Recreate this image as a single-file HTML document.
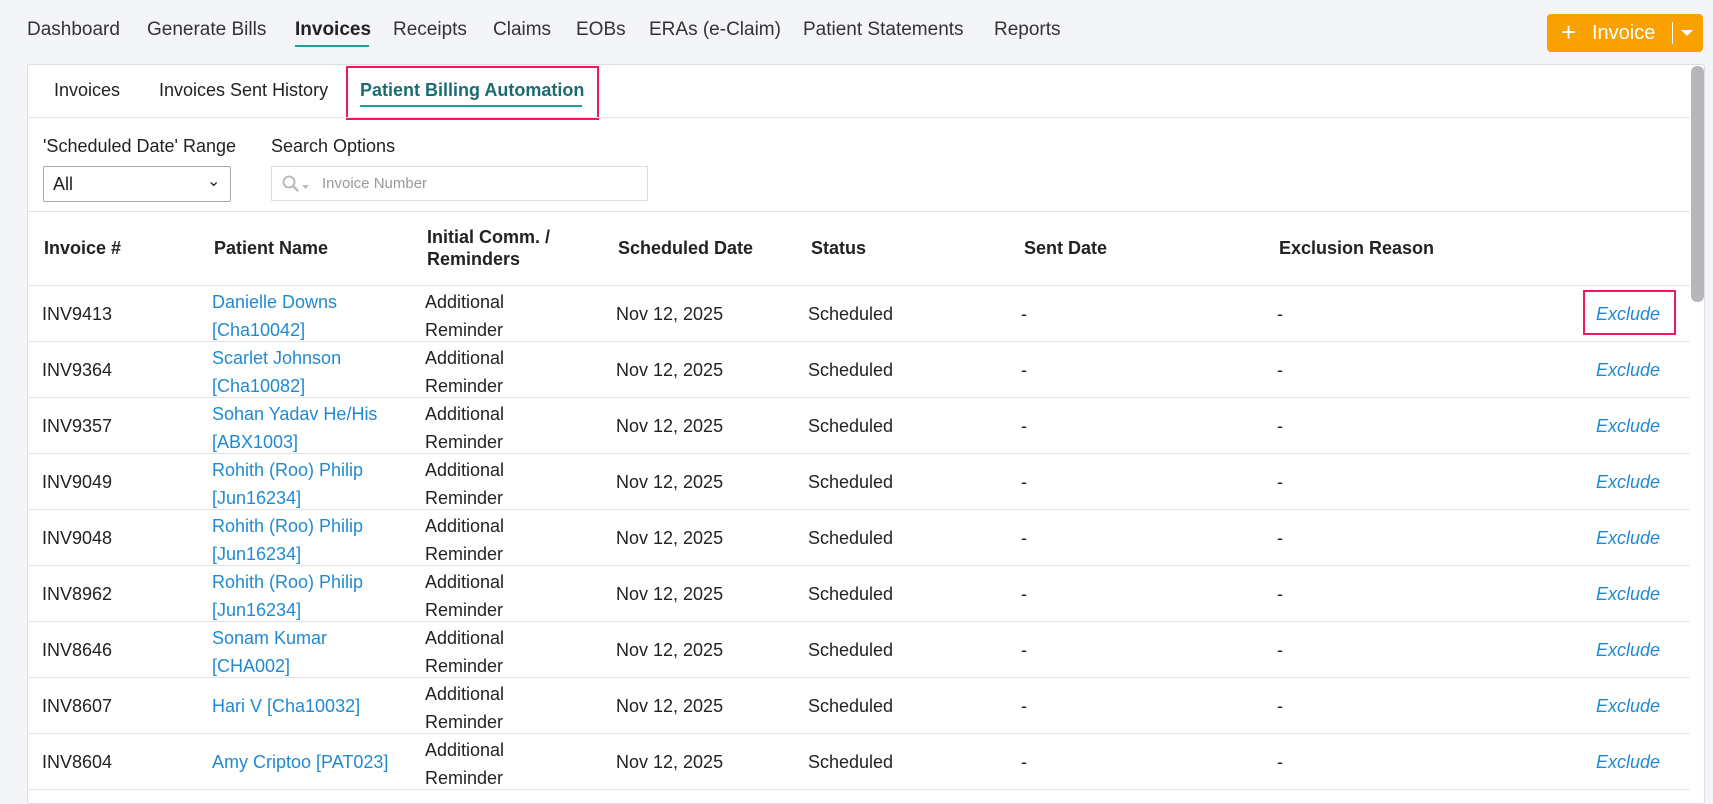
<!DOCTYPE html>
<html><head><style>
*{box-sizing:border-box;margin:0;padding:0}
body{width:1713px;height:791px;overflow:hidden;background:#f4f5f9;font-family:"Liberation Sans",sans-serif;color:#222;font-size:18px;position:relative}
.a{position:absolute;white-space:nowrap}
.nav{top:19px;font-size:19px;color:#333}
.card{position:absolute;left:27px;top:64px;width:1678px;height:740px;background:#fff;border:1px solid #dcdde0;border-radius:3px}
.lnk{color:#1f8ad2}
.ex{color:#1f8ad2;font-style:italic}
.hl{position:absolute;left:28px;width:1662px;height:1px;background:#e3e4e6}
</style></head><body>
<div class="a nav" style="left:27px">Dashboard</div>
<div class="a nav" style="left:147px">Generate Bills</div>
<div class="a nav" style="left:295px;font-weight:bold;color:#222">Invoices</div>
<div class="a" style="left:295px;top:45px;width:74px;height:2px;background:#1aa0a0"></div>
<div class="a nav" style="left:393px">Receipts</div>
<div class="a nav" style="left:493px">Claims</div>
<div class="a nav" style="left:576px">EOBs</div>
<div class="a nav" style="left:649px">ERAs (e-Claim)</div>
<div class="a nav" style="left:803px">Patient Statements</div>
<div class="a nav" style="left:994px">Reports</div>
<div class="a" style="left:1547px;top:14px;width:156px;height:38px;background:#f9a100;border-radius:4px;color:#fff;font-size:20px">
 <span class="a" style="left:14px;top:4px;font-size:26px;line-height:28px">+</span>
 <span class="a" style="left:45px;top:8px">Invoice</span>
 <span class="a" style="left:125px;top:8px;width:1px;height:22px;background:#fff"></span>
 <span class="a" style="left:134px;top:16px;width:0;height:0;border-left:6px solid transparent;border-right:6px solid transparent;border-top:6px solid #fff"></span>
</div>
<div class="card"></div>
<div class="a" style="left:1691px;top:66px;width:13px;height:236px;background:#b7b7b7;border-radius:6px"></div>
<div class="a" style="left:54px;top:80px;font-size:18px">Invoices</div>
<div class="a" style="left:159px;top:80px;font-size:18px">Invoices Sent History</div>
<div class="a" style="left:360px;top:80px;font-size:18px;font-weight:bold;color:#1d6b72">Patient Billing Automation</div>
<div class="a" style="left:360px;top:105px;width:222px;height:2px;background:#1aa0a0"></div>
<div class="a" style="left:346px;top:66px;width:253px;height:54px;border:2px solid #f0185a"></div>
<div class="hl" style="top:117px"></div>
<div class="a" style="left:43px;top:136px">'Scheduled Date' Range</div>
<div class="a" style="left:271px;top:136px">Search Options</div>
<div class="a" style="left:43px;top:166px;width:188px;height:36px;border:1px solid #a9a9a9;border-radius:2px"><span class="a" style="left:9px;top:7px">All</span><span class="a" style="left:163px;top:4px;font-size:16px">&#8964;</span></div>
<div class="a" style="left:271px;top:166px;width:377px;height:35px;border:1px solid #ddd">
 <svg class="a" style="left:10px;top:8px" width="30" height="18"><circle cx="7" cy="7" r="5.5" fill="none" stroke="#bbb" stroke-width="2"/><line x1="11" y1="11" x2="16" y2="16" stroke="#bbb" stroke-width="2.5"/><path d="M20 10h7l-3.5 4z" fill="#bbb"/></svg>
 <span class="a" style="left:50px;top:8px;font-size:15px;color:#999">Invoice Number</span>
</div>
<div class="hl" style="top:211px"></div>
<div style="font-weight:bold">
<div class="a" style="left:44px;top:238px">Invoice #</div>
<div class="a" style="left:214px;top:238px">Patient Name</div>
<div class="a" style="left:427px;top:226px;line-height:22px">Initial Comm. /<br>Reminders</div>
<div class="a" style="left:618px;top:238px">Scheduled Date</div>
<div class="a" style="left:811px;top:238px">Status</div>
<div class="a" style="left:1024px;top:238px">Sent Date</div>
<div class="a" style="left:1279px;top:238px">Exclusion Reason</div>
</div>
<div class="hl" style="top:285px"></div>
<div id="rows"></div>
<div class="a" style="left:1583px;top:290px;width:93px;height:45px;border:2px solid #f0185a"></div>
<script>
var d=[["INV9413","Danielle Downs","[Cha10042]"],["INV9364","Scarlet Johnson","[Cha10082]"],["INV9357","Sohan Yadav He/His","[ABX1003]"],["INV9049","Rohith (Roo) Philip","[Jun16234]"],["INV9048","Rohith (Roo) Philip","[Jun16234]"],["INV8962","Rohith (Roo) Philip","[Jun16234]"],["INV8646","Sonam Kumar","[CHA002]"],["INV8607","Hari V [Cha10032]",""],["INV8604","Amy Criptoo [PAT023]",""]];
var h="";
d.forEach(function(r,i){var t=285+i*56;var c=t+19;
h+='<div class="a" style="left:42px;top:'+c+'px">'+r[0]+'</div>';
if(r[2])h+='<div class="a lnk" style="left:212px;top:'+(t+3)+'px;line-height:28px">'+r[1]+'<br>'+r[2]+'</div>';
else h+='<div class="a lnk" style="left:212px;top:'+c+'px">'+r[1]+'</div>';
h+='<div class="a" style="left:425px;top:'+(t+3)+'px;line-height:28px">Additional<br>Reminder</div>';
h+='<div class="a" style="left:616px;top:'+c+'px">Nov 12, 2025</div>';
h+='<div class="a" style="left:808px;top:'+c+'px">Scheduled</div>';
h+='<div class="a" style="left:1021px;top:'+c+'px">-</div>';
h+='<div class="a" style="left:1277px;top:'+c+'px">-</div>';
h+='<div class="a ex" style="left:1596px;top:'+c+'px">Exclude</div>';
h+='<div class="hl" style="top:'+(t+56)+'px"></div>';});
document.getElementById("rows").innerHTML=h;
</script>
</body></html>
